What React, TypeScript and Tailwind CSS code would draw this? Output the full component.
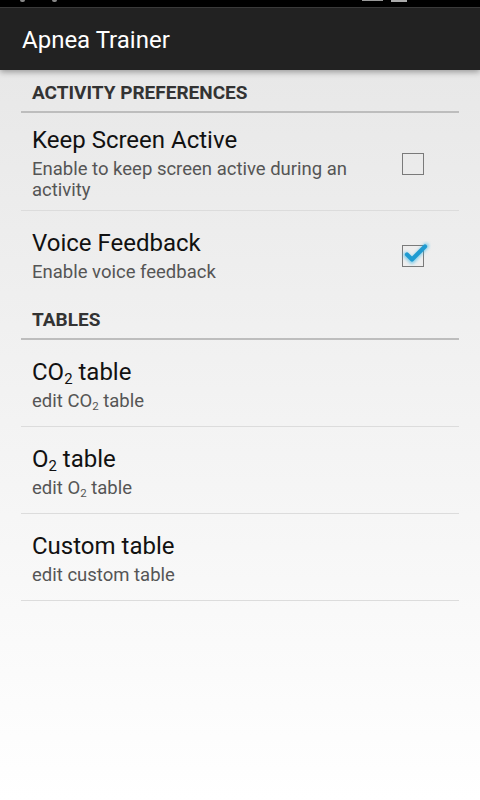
import React, { useState } from 'react';

const font = { fontFamily: 'Roboto, "Noto Sans", sans-serif' };

const CheckBox = ({ checked }: { checked: boolean }) => (
    <div className="relative w-[22px] h-[22px]">
        <div className="absolute inset-0 border-[1.5px] border-[#7a7a7a] bg-transparent" />
        {checked && (
            <svg className="absolute -top-[5px] -left-[1px] w-[30px] h-[28px]" viewBox="0 0 30 28">
                <defs>
                    <filter id="glow" x="-30%" y="-30%" width="160%" height="160%">
                        <feGaussianBlur stdDeviation="1.6" />
                    </filter>
                </defs>
                <path d="M5 15 L11 21 L25 6" fill="none" stroke="#33b5e5" strokeWidth="6" strokeLinecap="round" strokeLinejoin="round" opacity="0.5" filter="url(#glow)" />
                <path d="M6 14.5 L11 19.5 L24 6.5" fill="none" stroke="#1f9bd1" strokeWidth="4.2" strokeLinecap="round" strokeLinejoin="round" />
            </svg>
        )}
    </div>
);

const Category = ({ title }: { title: string }) => (
    <div className="pt-[12px]">
        <div className="px-[11px] pb-[7px] text-[19px] leading-[22px] font-bold text-[#333]">{title}</div>
        <div className="h-[2px] bg-[#bdbdbd]" />
    </div>
);

const Pref = ({
    title,
    summary,
    checked,
    onToggle,
    divider = true,
}: {
    title: React.ReactNode;
    summary: React.ReactNode;
    checked?: boolean;
    onToggle?: () => void;
    divider?: boolean;
}) => (
    <div className={divider ? 'border-b border-[#dcdcdc]' : ''}>
        <div className="flex items-center min-h-[86px] pt-[13px] pb-[9px] px-[11px]" onClick={onToggle}>
            <div className="flex-1 pr-[16px]">
                <div className="text-[24px] leading-[28px] text-[#111]">{title}</div>
                <div className="mt-[5px] text-[18.5px] leading-[21px] text-[#555]">{summary}</div>
            </div>
            {checked !== undefined && (
                <div className="w-[22px] mr-[24px] shrink-0">
                    <CheckBox checked={checked} />
                </div>
            )}
        </div>
    </div>
);

const Sub = ({ children }: { children: React.ReactNode }) => (
    <span className="inline-block text-[0.62em] leading-none translate-y-[0.3em]">{children}</span>
);

export default function App() {
    const [keepActive, setKeepActive] = useState(false);
    const [voice, setVoice] = useState(true);

    return (
        <div className="w-[480px] h-[800px] flex flex-col overflow-hidden" style={font}>
            <div className="h-[7px] bg-black relative shrink-0">
                <div className="absolute left-[20px] top-0 w-[5px] h-[2px] rounded-b bg-[#888]" />
                <div className="absolute left-[52px] top-0 w-[5px] h-[2px] rounded-b bg-[#888]" />
                <div className="absolute left-[362px] top-0 w-[21px] h-[1px] bg-[#999]" />
                <div className="absolute left-[391px] top-0 w-[16px] h-[2px] bg-[#aaa]" />
            </div>
            <div className="h-[63px] bg-[#222] border-t border-[#3a3a3a] flex items-center px-[22px] shrink-0 relative z-10 shadow-[0_2px_6px_rgba(0,0,0,0.35)]">
                <span className="text-[24px] text-white translate-y-[1px]">Apnea Trainer</span>
            </div>
            <div className="flex-1 bg-gradient-to-b from-[#e8e8e8] to-[#ffffff] px-[21px]">
                <Category title="ACTIVITY PREFERENCES" />
                <Pref
                    title="Keep Screen Active"
                    summary="Enable to keep screen active during an activity"
                    checked={keepActive}
                    onToggle={() => setKeepActive(!keepActive)}
                />
                <Pref
                    title="Voice Feedback"
                    summary="Enable voice feedback"
                    checked={voice}
                    onToggle={() => setVoice(!voice)}
                    divider={false}
                />
                <Category title="TABLES" />
                <Pref title={<>CO<Sub>2</Sub> table</>} summary={<>edit CO<Sub>2</Sub> table</>} />
                <Pref title={<>O<Sub>2</Sub> table</>} summary={<>edit O<Sub>2</Sub> table</>} />
                <Pref title="Custom table" summary="edit custom table" />
            </div>
        </div>
    );
}
